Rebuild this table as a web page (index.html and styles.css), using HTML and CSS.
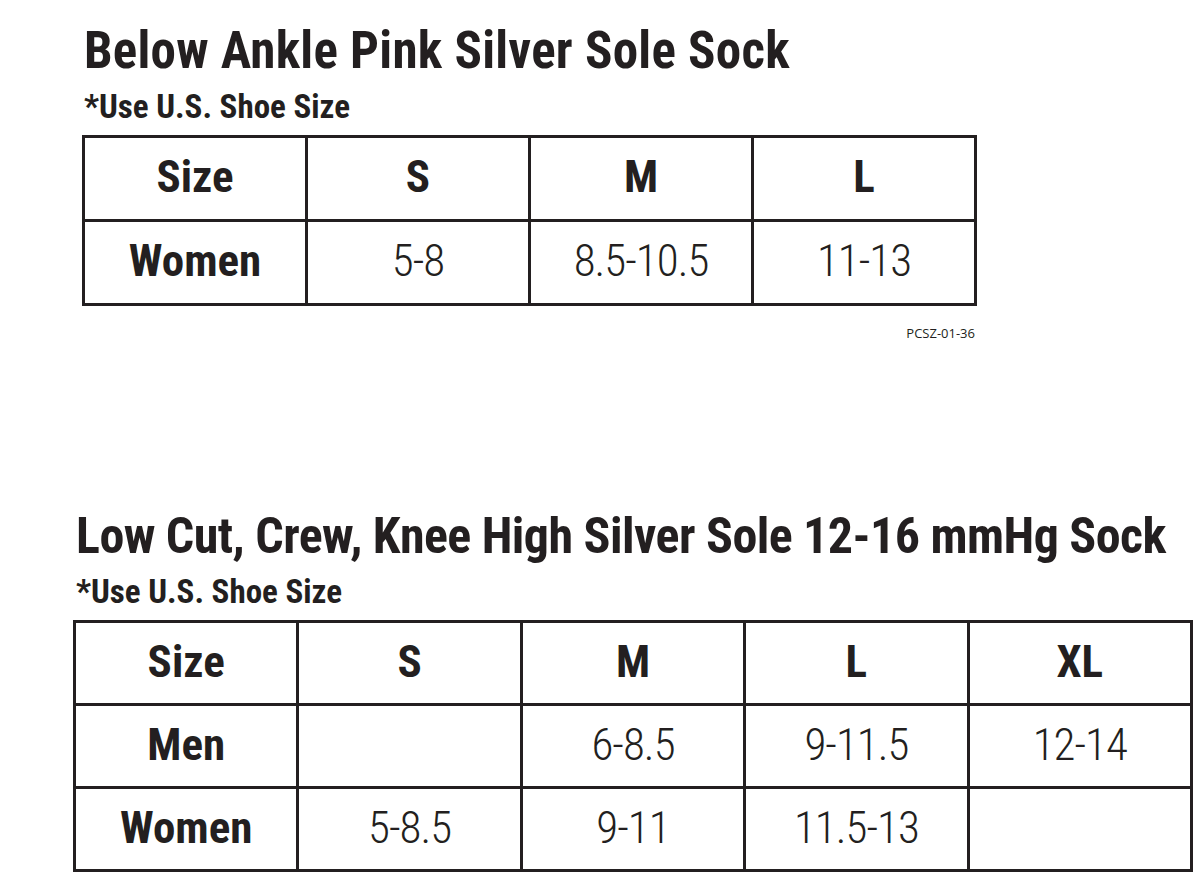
FILE: index.html
```html
<!DOCTYPE html>
<html lang="en">
<head>
<meta charset="utf-8">
<title>Silver Sole Sock Size Charts</title>
<link rel="stylesheet" href="styles.css">
</head>
<body>
<section class="block block-one">
  <h1 class="title">Below Ankle Pink Silver Sole Sock</h1>
  <p class="note">*Use U.S. Shoe Size</p>
  <div class="chart chart-4">
    <div class="cell head">Size</div>
    <div class="cell head">S</div>
    <div class="cell head">M</div>
    <div class="cell head">L</div>
    <div class="cell head">Women</div>
    <div class="cell val">5-8</div>
    <div class="cell val">8.5-10.5</div>
    <div class="cell val">11-13</div>
  </div>
  <p class="code">PCSZ-01-36</p>
</section>
<section class="block block-two">
  <h1 class="title">Low Cut, Crew, Knee High Silver Sole 12-16 mmHg Sock</h1>
  <p class="note">*Use U.S. Shoe Size</p>
  <div class="chart chart-5">
    <div class="cell head">Size</div>
    <div class="cell head">S</div>
    <div class="cell head">M</div>
    <div class="cell head">L</div>
    <div class="cell head">XL</div>
    <div class="cell head">Men</div>
    <div class="cell val"></div>
    <div class="cell val">6-8.5</div>
    <div class="cell val">9-11.5</div>
    <div class="cell val">12-14</div>
    <div class="cell head">Women</div>
    <div class="cell val">5-8.5</div>
    <div class="cell val">9-11</div>
    <div class="cell val">11.5-13</div>
    <div class="cell val"></div>
  </div>
</section>
</body>
</html>
```
FILE: styles.css
```css
html, body {
  margin: 0;
  padding: 0;
  background: #ffffff;
}

body {
  color: #231f20;
  font-family: "Roboto Condensed", Roboto, "Liberation Sans", sans-serif;
  width: 1200px;
  height: 883px;
  overflow: hidden;
}

.block {
  display: flex;
  flex-direction: column;
  align-items: flex-start;
}

.block-one {
  padding: 21px 0 0 82px;
}

.block-two {
  padding: 165px 0 0 73px;
}

.block-one .title,
.block-one .note {
  margin-left: 2px;
}

.block-two .title,
.block-two .note {
  margin-left: 3px;
}

.title {
  margin: 0;
  font-family: "Roboto Condensed", Roboto, sans-serif;
  font-weight: 700;
  font-stretch: condensed;
  font-size: 51px;
  line-height: 60px;
  letter-spacing: 0.25px;
  white-space: nowrap;
}

.block-two .title {
  font-size: 50px;
  letter-spacing: -0.55px;
}

.note {
  margin: 6px 0 0 0;
  font-family: "Roboto Condensed", Roboto, sans-serif;
  font-weight: 700;
  font-stretch: condensed;
  font-size: 33px;
  line-height: 40px;
}

.chart {
  display: grid;
  gap: 3px;
  padding: 3px;
  margin-top: 8px;
  background: #231f20;
  box-sizing: border-box;
}

.chart-4 {
  width: 895px;
  grid-template-columns: repeat(4, 1fr);
  grid-auto-rows: 81px;
}

.chart-5 {
  width: 1120px;
  grid-template-columns: repeat(5, 1fr);
  grid-auto-rows: 80px;
}

.cell {
  background: #ffffff;
  display: flex;
  align-items: center;
  justify-content: center;
  line-height: 1;
  padding-bottom: 4px;
  box-sizing: border-box;
}

.head {
  font-family: "Roboto Condensed", Roboto, sans-serif;
  font-weight: 700;
  font-stretch: condensed;
  font-size: 45px;
}

.val {
  font-family: "Roboto Condensed", Roboto, sans-serif;
  font-weight: 300;
  font-stretch: condensed;
  font-size: 45px;
  letter-spacing: -1px;
}

.code {
  width: 893px;
  margin: 19px 0 0 0;
  text-align: right;
  font-family: "Open Sans", "Liberation Sans", sans-serif;
  font-size: 13px;
  line-height: 16px;
}
```
